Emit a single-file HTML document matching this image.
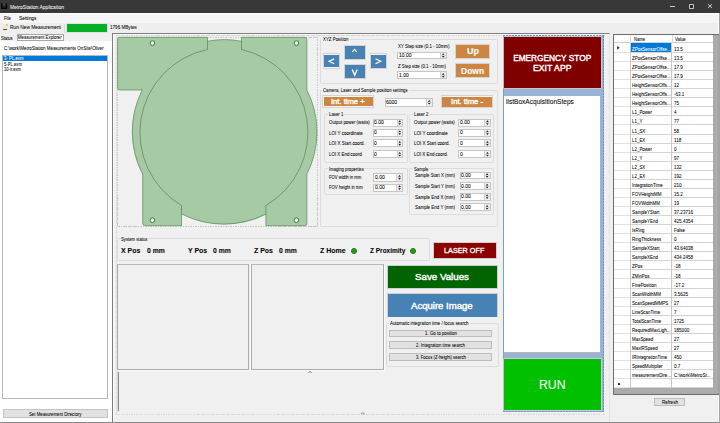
<!DOCTYPE html>
<html><head><meta charset="utf-8">
<style>
*{box-sizing:border-box;margin:0;padding:0}
html,body{width:720px;height:423px;overflow:hidden;background:#f0f0f0;font-family:"Liberation Sans",sans-serif;color:#000}
.a{position:absolute}
.t{position:absolute;white-space:nowrap;line-height:1;transform-origin:0 50%;-webkit-text-stroke:0.06px currentColor}
</style></head><body>
<div class="a" style="left:0.00px;top:0.00px;width:720.00px;height:12.60px;background:#383838"></div>
<svg class="a" style="left:0;top:0" width="10" height="12"><path d="M1.1 2.9 H2.4 V7.6 H5.8 V2.9 H7.1 V9 H1.1 Z" fill="#000"/><path d="M2.4 5.3 L4.1 6.6 L6.4 3.6" stroke="#1a1a1a" stroke-width="1.1" fill="none"/><path d="M2.6 4.2 L4.1 5.6 L5.8 3.4" stroke="#6a6a6a" stroke-width="0.5" fill="none"/></svg>
<div class="t" style="left:9.90px;top:4.72px;font-size:5.7px;color:#f4f4f4;transform:scaleX(0.880);">MetroStation Application</div>
<div class="a" style="left:670.00px;top:6.10px;width:5.00px;height:0.70px;background:#c8c8c8"></div>
<div class="a" style="left:688.80px;top:4.20px;width:5.20px;height:4.40px;border:1px solid #c4c4c4;border-radius:0.8px;background:#2a2a2a"></div>
<svg class="a" style="left:706px;top:3.2px" width="7" height="7"><path d="M1.9 1.1 L6 5 M6 1.1 L1.9 5" stroke="#d4d4d4" stroke-width="0.9"/></svg>
<div class="a" style="left:0.00px;top:12.60px;width:720.00px;height:10.20px;background:#f5f5f5"></div>
<div class="a" style="left:0.00px;top:12.60px;width:720.00px;height:1.00px;background:#fdfdfd"></div>
<div class="t" style="left:4.00px;top:15.72px;font-size:5.5px;transform:scaleX(0.779);">File</div>
<div class="t" style="left:18.90px;top:15.72px;font-size:5.5px;transform:scaleX(0.876);">Settings</div>
<div class="a" style="left:0.00px;top:22.80px;width:720.00px;height:11.20px;background:#eeeeee"></div>
<div class="a" style="left:3.00px;top:24.30px;width:4.80px;height:6.20px;background:#efe9d2"></div>
<div class="a" style="left:6.30px;top:24.30px;width:1.50px;height:1.50px;background:#d8d0b0"></div>
<div class="a" style="left:3.40px;top:29.00px;width:3.90px;height:1.00px;background:#4a4a48;border-radius:0.5px"></div>
<div class="t" style="left:10.00px;top:24.42px;font-size:6.1px;transform:scaleX(0.796);">Run New Measurement</div>
<div class="a" style="left:66.00px;top:23.20px;width:42.20px;height:9.50px;background:#e2e2e2"></div>
<div class="a" style="left:66.90px;top:24.00px;width:40.40px;height:7.90px;background:#06b025"></div>
<div class="a" style="left:64.40px;top:23.60px;width:0.80px;height:9.40px;background:#dcdcdc"></div>
<div class="t" style="left:109.80px;top:24.42px;font-size:6.1px;transform:scaleX(0.753);">1796 MBytes</div>
<div class="a" style="left:0.00px;top:41.10px;width:112.00px;height:380.90px;background:#fff"></div>
<div class="a" style="left:0.00px;top:34.70px;width:16.00px;height:6.80px;background:#f0f0f0"></div>
<div class="t" style="left:1.00px;top:35.82px;font-size:5.5px;transform:scaleX(0.744);">Status</div>
<div class="a" style="left:16.50px;top:34.10px;width:47.10px;height:6.50px;background:#fff;border:0.7px solid #a5a5a5"></div>
<div class="t" style="left:18.00px;top:34.92px;font-size:5.5px;transform:scaleX(0.785);">Measurement Explorer</div>
<div class="t" style="left:4.10px;top:46.32px;font-size:5.7px;transform:scaleX(0.781);">C:\work\MetroStation Measurements OnSite\Oliver</div>
<div class="a" style="left:2.10px;top:55.10px;width:105.90px;height:344.40px;background:#fff;border:0.7px solid #b3b8c0"></div>
<div class="a" style="left:2.80px;top:56.10px;width:104.60px;height:5.40px;background:#0078d7"></div>
<div class="t" style="left:3.80px;top:56.42px;font-size:5.7px;color:#fff;transform:scaleX(0.755);">3- PL.exm</div>
<div class="t" style="left:3.80px;top:62.12px;font-size:5.7px;transform:scaleX(0.738);">5-PL.exm</div>
<div class="t" style="left:3.80px;top:67.02px;font-size:5.7px;transform:scaleX(0.725);">10-ir.exm</div>
<div class="a" style="left:3.20px;top:409.30px;width:104.50px;height:8.40px;background:#e1e1e1;border:0.7px solid #c4c4c4"></div>
<div class="t" style="left:28.70px;top:411.82px;font-size:5.7px;transform:scaleX(0.757);">Set Measurement Directory</div>
<div class="a" style="left:112.00px;top:33.10px;width:498.20px;height:388.90px;border-top:1px solid #7d7d7d;border-left:1px solid #7d7d7d;border-right:1px solid #e3e3e3"></div>
<div class="a" style="left:113.00px;top:34.10px;width:1.00px;height:387.90px;background:#fbfbfb"></div>
<div class="a" style="left:113.00px;top:34.10px;width:496.00px;height:0.90px;background:#fbfbfb"></div>
<div class="a" style="left:116.30px;top:35.00px;width:488.70px;height:1.00px;background:repeating-linear-gradient(90deg,#d2d2d2 0 1.5px,transparent 1.5px 2.5px)"></div>
<div class="a" style="left:116.30px;top:414.00px;width:488.70px;height:1.00px;background:repeating-linear-gradient(90deg,#d6d6d6 0 1.5px,transparent 1.5px 2.5px)"></div>
<div class="a" style="left:116.00px;top:35.20px;width:1.00px;height:379.30px;background:repeating-linear-gradient(180deg,#dddddd 0 1.5px,transparent 1.5px 2.5px)"></div>
<div class="a" style="left:117.50px;top:37.00px;width:199.70px;height:1.00px;background:repeating-linear-gradient(90deg,#c8c8c8 0 1.5px,transparent 1.5px 2.5px)"></div>
<div class="a" style="left:117.50px;top:226.00px;width:199.70px;height:1.00px;background:repeating-linear-gradient(90deg,#c4c4c4 0 1.5px,transparent 1.5px 2.5px)"></div>
<div class="a" style="left:117.00px;top:37.40px;width:1.00px;height:189.00px;background:repeating-linear-gradient(180deg,#cacaca 0 1.5px,transparent 1.5px 2.5px)"></div>
<div class="a" style="left:317.00px;top:37.40px;width:1.00px;height:189.00px;background:repeating-linear-gradient(180deg,#cacaca 0 1.5px,transparent 1.5px 2.5px)"></div>
<svg class="a" style="left:0;top:0" width="720" height="423" viewBox="0 0 720 423">
<g fill="#a6caa4" stroke="none">
<circle cx="224.5" cy="132.1" r="92.5"/>
<path d="M119.8 37.3 H207.5 V90 H119.8 Q117.6 90 117.6 87.8 V39.5 Q117.6 37.3 119.8 37.3 Z"/>
<path d="M241.5 37.3 H304.7 Q306.9 37.3 306.9 39.5 V90 H241.5 Z"/>
<path d="M142.7 150 H181.5 V225.6 H144.9 Q142.7 225.6 142.7 223.4 Z"/>
<path d="M265.9 150 H306.9 V223.4 Q306.9 225.6 304.7 225.6 H265.9 Z"/>
</g>
<g fill="none" stroke="#467a46" stroke-width="0.6">
<path d="M207.5 49.5 A84.8 84.8 0 0 0 181.5 205.5"/>
<path d="M241.5 49.5 A84.8 84.8 0 0 1 265.9 205.5"/>
<path d="M119.8 37.3 H207.5 V49.6"/>
<path d="M241.5 49.6 V37.3 H304.7 Q306.9 37.3 306.9 39.5 V90"/>
<path d="M117.6 39.5 Q117.6 37.3 119.8 37.3"/>
<path d="M117.6 39.5 V87.8 Q117.6 90 119.8 90 H142.2"/>
<path d="M142.2 90 A92.5 92.5 0 0 0 142.7 174.1 V223.4 Q142.7 225.6 144.9 225.6 H181.5 V213.9"/>
<path d="M181.5 213.9 A92.5 92.5 0 0 0 265.9 213.9"/>
<path d="M181.5 205.5 V213.9 M265.9 205.5 V213.9"/>
<path d="M265.9 213.9 V225.6 H304.7 Q306.9 225.6 306.9 223.4 V174.1 A92.5 92.5 0 0 0 306.9 90"/>
<path d="M207.5 41.2 A92.5 92.5 0 0 1 241.5 41.2" stroke-width="0.6"/>
</g>
<g fill="#f8f8f8" stroke="#3f7645" stroke-width="1.0">
<circle cx="152.4" cy="43.1" r="2.3"/><circle cx="296.4" cy="43.1" r="2.3"/>
<circle cx="152.4" cy="220.2" r="2.3"/><circle cx="296.4" cy="220.2" r="2.3"/>
</g>
</svg>
<div class="a" style="left:319.50px;top:38.90px;width:178.10px;height:44.70px;border:1px solid #dcdcdc;border-radius:1.5px"></div>
<div class="a" style="left:322.20px;top:37.30px;width:27.40px;height:4.00px;background:#f0f0f0"></div>
<div class="t" style="left:323.20px;top:37.32px;font-size:5.7px;transform:scaleX(0.771);">XYZ Position</div>
<div class="a" style="left:322.60px;top:53.20px;width:17.70px;height:15.60px;background:#f6f6f6;border:0.8px solid #d6d2ce"></div>
<div class="a" style="left:324.00px;top:54.60px;width:14.90px;height:12.80px;background:#4682b4"></div>
<div class="a" style="left:343.50px;top:44.90px;width:22.90px;height:15.30px;background:#f6f6f6;border:0.8px solid #d6d2ce"></div>
<div class="a" style="left:344.90px;top:46.30px;width:20.10px;height:12.50px;background:#4682b4"></div>
<div class="a" style="left:343.50px;top:63.50px;width:22.90px;height:15.60px;background:#f6f6f6;border:0.8px solid #d6d2ce"></div>
<div class="a" style="left:344.90px;top:64.90px;width:20.10px;height:12.80px;background:#4682b4"></div>
<div class="a" style="left:369.60px;top:53.10px;width:17.90px;height:15.80px;background:#f6f6f6;border:0.8px solid #d6d2ce"></div>
<div class="a" style="left:371.00px;top:54.50px;width:15.10px;height:13.00px;background:#4682b4"></div>
<svg class="a" style="left:0;top:0" width="720" height="423"><g stroke="#fff" stroke-width="1.2" fill="none" stroke-linecap="butt"><path d="M334.2 58.9 L329 61.3 L334.2 63.8"/><path d="M375.5 58.7 L380.7 61.2 L375.5 63.8"/><path d="M352.3 51.8 L354.5 49.4 L356.7 51.8"/><path d="M352.2 69.6 L354.7 75.3 L357.2 69.6" stroke-width="1.35"/></g></svg>
<div class="t" style="left:398.00px;top:44.32px;font-size:5.7px;transform:scaleX(0.773);">XY Step size (0.1 - 10mm)</div>
<div class="a" style="left:397.30px;top:51.50px;width:49.50px;height:7.90px;background:#fff;border:1px solid #c6c6c6"></div>
<div class="a" style="left:440.00px;top:52.50px;width:5.80px;height:5.90px;background:#ededed;border-left:0.8px solid #d0d0d0"></div>
<div class="a" style="left:440.50px;top:55.15px;width:5.30px;height:0.60px;background:#d6d6d6"></div>
<div class="t" style="left:398.70px;top:52.97px;font-size:5.7px;transform:scaleX(0.880);">10.00</div>
<div class="t" style="left:398.00px;top:64.32px;font-size:5.7px;transform:scaleX(0.765);">Z Step size (0.1 - 10mm)</div>
<div class="a" style="left:397.30px;top:71.40px;width:49.50px;height:7.90px;background:#fff;border:1px solid #c6c6c6"></div>
<div class="a" style="left:440.00px;top:72.40px;width:5.80px;height:5.90px;background:#ededed;border-left:0.8px solid #d0d0d0"></div>
<div class="a" style="left:440.50px;top:75.05px;width:5.30px;height:0.60px;background:#d6d6d6"></div>
<div class="t" style="left:398.70px;top:72.87px;font-size:5.7px;transform:scaleX(0.880);">1.00</div>
<div class="a" style="left:454.70px;top:43.80px;width:35.80px;height:15.30px;background:#f6f6f6;border:0.8px solid #d4d4d4"></div>
<div class="a" style="left:456.00px;top:45.10px;width:33.20px;height:12.70px;background:#cd853f"></div>
<div class="t" style="left:466.65px;top:47.46px;font-size:9.0px;font-weight:bold;color:#fff;transform:scaleX(0.992);-webkit-text-stroke:0.1px #fff">Up</div>
<div class="a" style="left:454.70px;top:62.60px;width:35.80px;height:15.70px;background:#f6f6f6;border:0.8px solid #d4d4d4"></div>
<div class="a" style="left:456.00px;top:63.90px;width:33.20px;height:13.10px;background:#cd853f"></div>
<div class="t" style="left:461.05px;top:66.95px;font-size:8.6px;font-weight:bold;color:#fff;transform:scaleX(0.987);-webkit-text-stroke:0.1px #fff">Down</div>
<div class="a" style="left:319.90px;top:90.00px;width:177.70px;height:137.10px;border:1px solid #dcdcdc;border-radius:1.5px"></div>
<div class="a" style="left:322.20px;top:88.40px;width:86.80px;height:4.00px;background:#f0f0f0"></div>
<div class="t" style="left:323.20px;top:88.42px;font-size:5.7px;transform:scaleX(0.756);">Camera, Laser and Sample position settings</div>
<div class="a" style="left:322.20px;top:95.30px;width:51.80px;height:12.50px;background:#f6f6f6;border:0.8px solid #d4d4d4"></div>
<div class="a" style="left:323.50px;top:96.60px;width:49.20px;height:9.90px;background:#cd853f"></div>
<div class="t" style="left:331.25px;top:97.74px;font-size:7.4px;color:#fff;transform:scaleX(1.031);-webkit-text-stroke:0.35px #fff">Int. time +</div>
<div class="a" style="left:385.00px;top:98.00px;width:47.80px;height:8.60px;background:#fff;border:1px solid #c6c6c6"></div>
<div class="a" style="left:426.00px;top:99.00px;width:5.80px;height:6.60px;background:#ededed;border-left:0.8px solid #d0d0d0"></div>
<div class="a" style="left:426.50px;top:102.00px;width:5.30px;height:0.60px;background:#d6d6d6"></div>
<div class="t" style="left:386.40px;top:99.82px;font-size:5.7px;transform:scaleX(0.880);">6000</div>
<div class="a" style="left:440.70px;top:95.30px;width:52.80px;height:12.80px;background:#f6f6f6;border:0.8px solid #d4d4d4"></div>
<div class="a" style="left:442.00px;top:96.60px;width:50.20px;height:10.20px;background:#cd853f"></div>
<div class="t" style="left:451.10px;top:97.89px;font-size:7.4px;color:#fff;transform:scaleX(1.038);-webkit-text-stroke:0.35px #fff">Int. time -</div>
<div class="a" style="left:324.40px;top:113.60px;width:83.30px;height:49.20px;border:1px solid #dcdcdc;border-radius:1.5px"></div>
<div class="a" style="left:327.60px;top:112.00px;width:16.40px;height:4.00px;background:#f0f0f0"></div>
<div class="t" style="left:328.60px;top:112.02px;font-size:5.7px;transform:scaleX(0.757);">Laser 1</div>
<div class="a" style="left:409.30px;top:113.60px;width:84.30px;height:49.20px;border:1px solid #dcdcdc;border-radius:1.5px"></div>
<div class="a" style="left:412.60px;top:112.00px;width:16.40px;height:4.00px;background:#f0f0f0"></div>
<div class="t" style="left:413.60px;top:112.02px;font-size:5.7px;transform:scaleX(0.757);">Laser 2</div>
<div class="t" style="left:328.60px;top:120.42px;font-size:5.7px;transform:scaleX(0.773);">Output power (watts)</div>
<div class="a" style="left:373.00px;top:118.50px;width:30.30px;height:8.20px;background:#fff;border:1px solid #c6c6c6"></div>
<div class="a" style="left:396.50px;top:119.50px;width:5.80px;height:6.20px;background:#ededed;border-left:0.8px solid #d0d0d0"></div>
<div class="a" style="left:397.00px;top:122.30px;width:5.30px;height:0.60px;background:#d6d6d6"></div>
<div class="t" style="left:374.40px;top:120.12px;font-size:5.7px;transform:scaleX(0.880);">0.00</div>
<div class="t" style="left:413.60px;top:120.42px;font-size:5.7px;transform:scaleX(0.773);">Output power (watts)</div>
<div class="a" style="left:458.20px;top:118.50px;width:32.80px;height:8.20px;background:#fff;border:1px solid #c6c6c6"></div>
<div class="a" style="left:484.20px;top:119.50px;width:5.80px;height:6.20px;background:#ededed;border-left:0.8px solid #d0d0d0"></div>
<div class="a" style="left:484.70px;top:122.30px;width:5.30px;height:0.60px;background:#d6d6d6"></div>
<div class="t" style="left:459.60px;top:120.12px;font-size:5.7px;transform:scaleX(0.880);">0.00</div>
<div class="t" style="left:328.60px;top:130.52px;font-size:5.7px;transform:scaleX(0.796);">LOI Y coordinate</div>
<div class="a" style="left:373.00px;top:128.60px;width:30.30px;height:8.20px;background:#fff;border:1px solid #c6c6c6"></div>
<div class="a" style="left:396.50px;top:129.60px;width:5.80px;height:6.20px;background:#ededed;border-left:0.8px solid #d0d0d0"></div>
<div class="a" style="left:397.00px;top:132.40px;width:5.30px;height:0.60px;background:#d6d6d6"></div>
<div class="t" style="left:374.40px;top:130.22px;font-size:5.7px;transform:scaleX(0.880);">0</div>
<div class="t" style="left:413.60px;top:130.52px;font-size:5.7px;transform:scaleX(0.796);">LOI Y coordinate</div>
<div class="a" style="left:458.20px;top:128.60px;width:32.80px;height:8.20px;background:#fff;border:1px solid #c6c6c6"></div>
<div class="a" style="left:484.20px;top:129.60px;width:5.80px;height:6.20px;background:#ededed;border-left:0.8px solid #d0d0d0"></div>
<div class="a" style="left:484.70px;top:132.40px;width:5.30px;height:0.60px;background:#d6d6d6"></div>
<div class="t" style="left:459.60px;top:130.22px;font-size:5.7px;transform:scaleX(0.880);">0</div>
<div class="t" style="left:328.60px;top:141.22px;font-size:5.7px;transform:scaleX(0.787);">LOI X Start coord.</div>
<div class="a" style="left:373.00px;top:139.30px;width:30.30px;height:8.20px;background:#fff;border:1px solid #c6c6c6"></div>
<div class="a" style="left:396.50px;top:140.30px;width:5.80px;height:6.20px;background:#ededed;border-left:0.8px solid #d0d0d0"></div>
<div class="a" style="left:397.00px;top:143.10px;width:5.30px;height:0.60px;background:#d6d6d6"></div>
<div class="t" style="left:374.40px;top:140.92px;font-size:5.7px;transform:scaleX(0.880);">0</div>
<div class="t" style="left:413.60px;top:141.22px;font-size:5.7px;transform:scaleX(0.787);">LOI X Start coord.</div>
<div class="a" style="left:458.20px;top:139.30px;width:32.80px;height:8.20px;background:#fff;border:1px solid #c6c6c6"></div>
<div class="a" style="left:484.20px;top:140.30px;width:5.80px;height:6.20px;background:#ededed;border-left:0.8px solid #d0d0d0"></div>
<div class="a" style="left:484.70px;top:143.10px;width:5.30px;height:0.60px;background:#d6d6d6"></div>
<div class="t" style="left:459.60px;top:140.92px;font-size:5.7px;transform:scaleX(0.880);">0</div>
<div class="t" style="left:328.60px;top:152.12px;font-size:5.7px;transform:scaleX(0.775);">LOI X End coord.</div>
<div class="a" style="left:373.00px;top:150.20px;width:30.30px;height:8.20px;background:#fff;border:1px solid #c6c6c6"></div>
<div class="a" style="left:396.50px;top:151.20px;width:5.80px;height:6.20px;background:#ededed;border-left:0.8px solid #d0d0d0"></div>
<div class="a" style="left:397.00px;top:154.00px;width:5.30px;height:0.60px;background:#d6d6d6"></div>
<div class="t" style="left:374.40px;top:151.82px;font-size:5.7px;transform:scaleX(0.880);">0</div>
<div class="t" style="left:413.60px;top:152.12px;font-size:5.7px;transform:scaleX(0.775);">LOI X End coord.</div>
<div class="a" style="left:458.20px;top:150.20px;width:32.80px;height:8.20px;background:#fff;border:1px solid #c6c6c6"></div>
<div class="a" style="left:484.20px;top:151.20px;width:5.80px;height:6.20px;background:#ededed;border-left:0.8px solid #d0d0d0"></div>
<div class="a" style="left:484.70px;top:154.00px;width:5.30px;height:0.60px;background:#d6d6d6"></div>
<div class="t" style="left:459.60px;top:151.82px;font-size:5.7px;transform:scaleX(0.880);">0</div>
<div class="a" style="left:324.40px;top:168.10px;width:83.20px;height:26.50px;border:1px solid #dcdcdc;border-radius:1.5px"></div>
<div class="a" style="left:327.60px;top:166.50px;width:36.90px;height:4.00px;background:#f0f0f0"></div>
<div class="t" style="left:328.60px;top:166.52px;font-size:5.7px;transform:scaleX(0.739);">Imaging properties</div>
<div class="t" style="left:328.60px;top:175.12px;font-size:5.7px;transform:scaleX(0.741);">FOV width in mm</div>
<div class="a" style="left:373.20px;top:173.20px;width:29.90px;height:8.40px;background:#fff;border:1px solid #c6c6c6"></div>
<div class="a" style="left:396.30px;top:174.20px;width:5.80px;height:6.40px;background:#ededed;border-left:0.8px solid #d0d0d0"></div>
<div class="a" style="left:396.80px;top:177.10px;width:5.30px;height:0.60px;background:#d6d6d6"></div>
<div class="t" style="left:374.60px;top:174.92px;font-size:5.7px;transform:scaleX(0.880);">0.00</div>
<div class="t" style="left:328.60px;top:185.22px;font-size:5.7px;transform:scaleX(0.738);">FOV height in mm</div>
<div class="a" style="left:373.20px;top:183.50px;width:29.90px;height:8.20px;background:#fff;border:1px solid #c6c6c6"></div>
<div class="a" style="left:396.30px;top:184.50px;width:5.80px;height:6.20px;background:#ededed;border-left:0.8px solid #d0d0d0"></div>
<div class="a" style="left:396.80px;top:187.30px;width:5.30px;height:0.60px;background:#d6d6d6"></div>
<div class="t" style="left:374.60px;top:185.12px;font-size:5.7px;transform:scaleX(0.880);">0.00</div>
<div class="a" style="left:408.80px;top:168.10px;width:84.80px;height:47.00px;border:1px solid #dcdcdc;border-radius:1.5px"></div>
<div class="a" style="left:412.60px;top:166.50px;width:16.40px;height:4.00px;background:#f0f0f0"></div>
<div class="t" style="left:413.60px;top:166.52px;font-size:5.7px;transform:scaleX(0.745);">Sample</div>
<div class="t" style="left:415.00px;top:173.32px;font-size:5.7px;transform:scaleX(0.752);">Sample Start X (mm)</div>
<div class="a" style="left:459.50px;top:171.60px;width:31.20px;height:7.80px;background:#fff;border:1px solid #c6c6c6"></div>
<div class="a" style="left:483.90px;top:172.60px;width:5.80px;height:5.80px;background:#ededed;border-left:0.8px solid #d0d0d0"></div>
<div class="a" style="left:484.40px;top:175.20px;width:5.30px;height:0.60px;background:#d6d6d6"></div>
<div class="t" style="left:460.90px;top:173.02px;font-size:5.7px;transform:scaleX(0.880);">0.00</div>
<div class="t" style="left:415.00px;top:183.92px;font-size:5.7px;transform:scaleX(0.755);">Sample Start Y (mm)</div>
<div class="a" style="left:459.50px;top:182.20px;width:31.20px;height:7.80px;background:#fff;border:1px solid #c6c6c6"></div>
<div class="a" style="left:483.90px;top:183.20px;width:5.80px;height:5.80px;background:#ededed;border-left:0.8px solid #d0d0d0"></div>
<div class="a" style="left:484.40px;top:185.80px;width:5.30px;height:0.60px;background:#d6d6d6"></div>
<div class="t" style="left:460.90px;top:183.62px;font-size:5.7px;transform:scaleX(0.880);">0.00</div>
<div class="t" style="left:415.00px;top:194.52px;font-size:5.7px;transform:scaleX(0.780);">Sample End X (mm)</div>
<div class="a" style="left:459.50px;top:192.80px;width:31.20px;height:7.80px;background:#fff;border:1px solid #c6c6c6"></div>
<div class="a" style="left:483.90px;top:193.80px;width:5.80px;height:5.80px;background:#ededed;border-left:0.8px solid #d0d0d0"></div>
<div class="a" style="left:484.40px;top:196.40px;width:5.30px;height:0.60px;background:#d6d6d6"></div>
<div class="t" style="left:460.90px;top:194.22px;font-size:5.7px;transform:scaleX(0.880);">0.00</div>
<div class="t" style="left:415.00px;top:205.12px;font-size:5.7px;transform:scaleX(0.783);">Sample End Y (mm)</div>
<div class="a" style="left:459.50px;top:203.40px;width:31.20px;height:7.80px;background:#fff;border:1px solid #c6c6c6"></div>
<div class="a" style="left:483.90px;top:204.40px;width:5.80px;height:5.80px;background:#ededed;border-left:0.8px solid #d0d0d0"></div>
<div class="a" style="left:484.40px;top:207.00px;width:5.30px;height:0.60px;background:#d6d6d6"></div>
<div class="t" style="left:460.90px;top:204.82px;font-size:5.7px;transform:scaleX(0.880);">0.00</div>
<div class="a" style="left:116.80px;top:238.40px;width:312.80px;height:23.00px;border:1px solid #dcdcdc;border-radius:1.5px"></div>
<div class="a" style="left:120.00px;top:236.80px;width:28.40px;height:4.00px;background:#f0f0f0"></div>
<div class="t" style="left:121.00px;top:236.82px;font-size:5.7px;transform:scaleX(0.738);">System status</div>
<div class="t" style="left:121.40px;top:247.44px;font-size:7.3px;font-weight:bold;transform:scaleX(0.956);">X Pos</div>
<div class="t" style="left:146.70px;top:247.44px;font-size:7.3px;font-weight:bold;transform:scaleX(0.933);">0 mm</div>
<div class="t" style="left:187.80px;top:247.44px;font-size:7.3px;font-weight:bold;transform:scaleX(0.953);">Y Pos</div>
<div class="t" style="left:213.20px;top:247.44px;font-size:7.3px;font-weight:bold;transform:scaleX(0.933);">0 mm</div>
<div class="t" style="left:254.20px;top:247.44px;font-size:7.3px;font-weight:bold;transform:scaleX(0.956);">Z Pos</div>
<div class="t" style="left:279.20px;top:247.44px;font-size:7.3px;font-weight:bold;transform:scaleX(0.933);">0 mm</div>
<div class="t" style="left:319.80px;top:247.44px;font-size:7.3px;font-weight:bold;transform:scaleX(0.960);">Z Home</div>
<div class="a" style="left:350.50px;top:248.00px;width:6.00px;height:6.00px;background:#1e9e1e;border-radius:50%;border:0.5px solid #157a15"></div>
<div class="t" style="left:369.60px;top:247.44px;font-size:7.3px;font-weight:bold;transform:scaleX(0.890);">Z Proximity</div>
<div class="a" style="left:410.00px;top:248.00px;width:6.00px;height:6.00px;background:#1e9e1e;border-radius:50%;border:0.5px solid #157a15"></div>
<div class="a" style="left:433.10px;top:242.20px;width:64.00px;height:16.90px;background:#e6e6e6;border:0.6px solid #cfcfcf"></div>
<div class="a" style="left:433.90px;top:243.00px;width:62.40px;height:15.30px;background:#8b0000"></div>
<div class="t" style="left:444.20px;top:246.89px;font-size:7.2px;color:#fff;transform:scaleX(1.010);-webkit-text-stroke:0.3px #fff">LASER OFF</div>
<div class="a" style="left:117.20px;top:263.70px;width:132.30px;height:106.10px;border:1px solid #ababab;border-top-color:#b8b8b8;background:#f0f0f0"></div>
<div class="a" style="left:249.50px;top:264.00px;width:1.40px;height:106.80px;background:#fbfbfb"></div>
<div class="a" style="left:251.10px;top:263.70px;width:132.70px;height:106.10px;border:1px solid #ababab;border-top-color:#b8b8b8;background:#f0f0f0"></div>
<div class="a" style="left:117.50px;top:369.80px;width:267.00px;height:1.10px;background:#fbfbfb"></div>
<div class="a" style="left:383.80px;top:264.00px;width:1.20px;height:106.80px;background:#fbfbfb"></div>
<div class="a" style="left:118.20px;top:372.00px;width:1.00px;height:38.80px;background:#8a8a8a"></div>
<div class="a" style="left:117.00px;top:371.00px;width:266.00px;height:40.50px;border-left:0.6px solid #d8d8d8"></div>
<div class="a" style="left:387.20px;top:264.80px;width:110.60px;height:24.00px;background:#e6e6e6;border:0.6px solid #cfcfcf"></div>
<div class="a" style="left:388.00px;top:265.60px;width:109.00px;height:22.40px;background:#006400"></div>
<div class="t" style="left:415.00px;top:273.06px;font-size:9.3px;color:#fff;transform:scaleX(1.048);-webkit-text-stroke:0.4px #fff">Save Values</div>
<div class="a" style="left:387.20px;top:293.10px;width:110.60px;height:24.40px;background:#e6e6e6;border:0.6px solid #cfcfcf"></div>
<div class="a" style="left:388.00px;top:293.90px;width:109.00px;height:22.80px;background:#4682b4"></div>
<div class="t" style="left:411.30px;top:301.71px;font-size:9.0px;color:#fff;transform:scaleX(1.063);-webkit-text-stroke:0.4px #fff">Acquire Image</div>
<div class="a" style="left:386.00px;top:323.00px;width:113.40px;height:44.20px;border:1px solid #dcdcdc;border-radius:1.5px"></div>
<div class="a" style="left:389.20px;top:321.40px;width:80.70px;height:4.00px;background:#f0f0f0"></div>
<div class="t" style="left:390.20px;top:321.42px;font-size:5.7px;transform:scaleX(0.764);">Automatic integration time / focus search</div>
<div class="a" style="left:389.40px;top:329.60px;width:102.40px;height:7.90px;background:#e1e1e1;border:0.8px solid #bdbdbd"></div>
<div class="t" style="left:424.60px;top:331.37px;font-size:5.7px;transform:scaleX(0.771);">1. Go to position</div>
<div class="a" style="left:389.40px;top:341.45px;width:102.40px;height:7.90px;background:#e1e1e1;border:0.8px solid #bdbdbd"></div>
<div class="t" style="left:416.10px;top:343.22px;font-size:5.7px;transform:scaleX(0.762);">2. Integration time search</div>
<div class="a" style="left:389.40px;top:353.30px;width:102.40px;height:7.90px;background:#e1e1e1;border:0.8px solid #bdbdbd"></div>
<div class="t" style="left:415.60px;top:355.07px;font-size:5.7px;transform:scaleX(0.748);">3. Focus (Z-height) search</div>
<div class="a" style="left:503.40px;top:36.00px;width:100.20px;height:375.60px;background:#98b3d3"></div>
<div class="a" style="left:503.00px;top:35.00px;width:100.60px;height:1.00px;background:repeating-linear-gradient(90deg,#6f8eb2 0 2px,transparent 2px 3px)"></div>
<div class="a" style="left:503.00px;top:411.00px;width:100.60px;height:1.00px;background:repeating-linear-gradient(90deg,#7f9cc0 0 2px,transparent 2px 3px)"></div>
<div class="a" style="left:603.00px;top:35.60px;width:1.00px;height:376.00px;background:repeating-linear-gradient(180deg,#6f8eb2 0 2px,transparent 2px 3px)"></div>
<div class="a" style="left:503.00px;top:36.00px;width:1.00px;height:375.60px;background:#7d9dc4"></div>
<div class="a" style="left:504.00px;top:36.80px;width:96.60px;height:51.00px;background:#800000;box-shadow:0 0 0 0.6px #e8c8c8"></div>
<div class="t" style="left:513.15px;top:53.75px;font-size:8.3px;color:#fff;-webkit-text-stroke:0.38px #fff">EMERGENCY STOP</div>
<div class="t" style="left:533.05px;top:63.75px;font-size:8.3px;color:#fff;transform:scaleX(1.047);-webkit-text-stroke:0.38px #fff">EXIT APP</div>
<div class="a" style="left:504.00px;top:96.40px;width:96.40px;height:256.90px;background:#fff;border-bottom:0.7px solid #b6b6b6"></div>
<div class="t" style="left:505.50px;top:99.08px;font-size:6.8px;transform:scaleX(0.966);">listBoxAcquisitionSteps</div>
<div class="a" style="left:504.00px;top:359.20px;width:96.60px;height:51.00px;background:#00c000;box-shadow:0 0 0 0.6px #e8d8e8"></div>
<div class="t" style="left:539.00px;top:379.30px;font-size:12.5px;color:#fff;transform:scaleX(0.982);">RUN</div>
<div class="a" style="left:610.20px;top:33.50px;width:109.80px;height:388.10px;background:#f0f0f0"></div>
<div class="a" style="left:613.30px;top:34.40px;width:106.70px;height:360.60px;background:#ababab;border-left:1px solid #6b6b6b;border-top:1px solid #6b6b6b;border-bottom:1px solid #6b6b6b;border-bottom-left-radius:1.5px"></div>
<div class="a" style="left:614.40px;top:35.40px;width:98.80px;height:7.90px;background:#fff;border-bottom:0.7px solid #d0d0d0"></div>
<div class="a" style="left:630.30px;top:35.40px;width:0.70px;height:7.90px;background:#d9d9d9"></div>
<div class="a" style="left:671.50px;top:35.40px;width:0.70px;height:7.90px;background:#d9d9d9"></div>
<div class="t" style="left:633.70px;top:36.92px;font-size:5.7px;transform:scaleX(0.730);">Name</div>
<div class="t" style="left:675.00px;top:36.92px;font-size:5.7px;transform:scaleX(0.763);">Value</div>
<div class="a" style="left:614.40px;top:43.30px;width:98.80px;height:344.30px;background:#fff"></div>
<div class="a" style="left:614.40px;top:51.96px;width:16.20px;height:0.80px;background:#e2e2e2"></div>
<div class="a" style="left:630.60px;top:51.96px;width:82.60px;height:0.80px;background:#d3d3d3"></div>
<div class="a" style="left:614.40px;top:61.02px;width:16.20px;height:0.80px;background:#e2e2e2"></div>
<div class="a" style="left:630.60px;top:61.02px;width:82.60px;height:0.80px;background:#d3d3d3"></div>
<div class="a" style="left:614.40px;top:70.08px;width:16.20px;height:0.80px;background:#e2e2e2"></div>
<div class="a" style="left:630.60px;top:70.08px;width:82.60px;height:0.80px;background:#d3d3d3"></div>
<div class="a" style="left:614.40px;top:79.14px;width:16.20px;height:0.80px;background:#e2e2e2"></div>
<div class="a" style="left:630.60px;top:79.14px;width:82.60px;height:0.80px;background:#d3d3d3"></div>
<div class="a" style="left:614.40px;top:88.20px;width:16.20px;height:0.80px;background:#e2e2e2"></div>
<div class="a" style="left:630.60px;top:88.20px;width:82.60px;height:0.80px;background:#d3d3d3"></div>
<div class="a" style="left:614.40px;top:97.26px;width:16.20px;height:0.80px;background:#e2e2e2"></div>
<div class="a" style="left:630.60px;top:97.26px;width:82.60px;height:0.80px;background:#d3d3d3"></div>
<div class="a" style="left:614.40px;top:106.32px;width:16.20px;height:0.80px;background:#e2e2e2"></div>
<div class="a" style="left:630.60px;top:106.32px;width:82.60px;height:0.80px;background:#d3d3d3"></div>
<div class="a" style="left:614.40px;top:115.38px;width:16.20px;height:0.80px;background:#e2e2e2"></div>
<div class="a" style="left:630.60px;top:115.38px;width:82.60px;height:0.80px;background:#d3d3d3"></div>
<div class="a" style="left:614.40px;top:124.44px;width:16.20px;height:0.80px;background:#e2e2e2"></div>
<div class="a" style="left:630.60px;top:124.44px;width:82.60px;height:0.80px;background:#d3d3d3"></div>
<div class="a" style="left:614.40px;top:133.51px;width:16.20px;height:0.80px;background:#e2e2e2"></div>
<div class="a" style="left:630.60px;top:133.51px;width:82.60px;height:0.80px;background:#d3d3d3"></div>
<div class="a" style="left:614.40px;top:142.57px;width:16.20px;height:0.80px;background:#e2e2e2"></div>
<div class="a" style="left:630.60px;top:142.57px;width:82.60px;height:0.80px;background:#d3d3d3"></div>
<div class="a" style="left:614.40px;top:151.63px;width:16.20px;height:0.80px;background:#e2e2e2"></div>
<div class="a" style="left:630.60px;top:151.63px;width:82.60px;height:0.80px;background:#d3d3d3"></div>
<div class="a" style="left:614.40px;top:160.69px;width:16.20px;height:0.80px;background:#e2e2e2"></div>
<div class="a" style="left:630.60px;top:160.69px;width:82.60px;height:0.80px;background:#d3d3d3"></div>
<div class="a" style="left:614.40px;top:169.75px;width:16.20px;height:0.80px;background:#e2e2e2"></div>
<div class="a" style="left:630.60px;top:169.75px;width:82.60px;height:0.80px;background:#d3d3d3"></div>
<div class="a" style="left:614.40px;top:178.81px;width:16.20px;height:0.80px;background:#e2e2e2"></div>
<div class="a" style="left:630.60px;top:178.81px;width:82.60px;height:0.80px;background:#d3d3d3"></div>
<div class="a" style="left:614.40px;top:187.87px;width:16.20px;height:0.80px;background:#e2e2e2"></div>
<div class="a" style="left:630.60px;top:187.87px;width:82.60px;height:0.80px;background:#d3d3d3"></div>
<div class="a" style="left:614.40px;top:196.93px;width:16.20px;height:0.80px;background:#e2e2e2"></div>
<div class="a" style="left:630.60px;top:196.93px;width:82.60px;height:0.80px;background:#d3d3d3"></div>
<div class="a" style="left:614.40px;top:205.99px;width:16.20px;height:0.80px;background:#e2e2e2"></div>
<div class="a" style="left:630.60px;top:205.99px;width:82.60px;height:0.80px;background:#d3d3d3"></div>
<div class="a" style="left:614.40px;top:215.05px;width:16.20px;height:0.80px;background:#e2e2e2"></div>
<div class="a" style="left:630.60px;top:215.05px;width:82.60px;height:0.80px;background:#d3d3d3"></div>
<div class="a" style="left:614.40px;top:224.11px;width:16.20px;height:0.80px;background:#e2e2e2"></div>
<div class="a" style="left:630.60px;top:224.11px;width:82.60px;height:0.80px;background:#d3d3d3"></div>
<div class="a" style="left:614.40px;top:233.17px;width:16.20px;height:0.80px;background:#e2e2e2"></div>
<div class="a" style="left:630.60px;top:233.17px;width:82.60px;height:0.80px;background:#d3d3d3"></div>
<div class="a" style="left:614.40px;top:242.23px;width:16.20px;height:0.80px;background:#e2e2e2"></div>
<div class="a" style="left:630.60px;top:242.23px;width:82.60px;height:0.80px;background:#d3d3d3"></div>
<div class="a" style="left:614.40px;top:251.29px;width:16.20px;height:0.80px;background:#e2e2e2"></div>
<div class="a" style="left:630.60px;top:251.29px;width:82.60px;height:0.80px;background:#d3d3d3"></div>
<div class="a" style="left:614.40px;top:260.35px;width:16.20px;height:0.80px;background:#e2e2e2"></div>
<div class="a" style="left:630.60px;top:260.35px;width:82.60px;height:0.80px;background:#d3d3d3"></div>
<div class="a" style="left:614.40px;top:269.41px;width:16.20px;height:0.80px;background:#e2e2e2"></div>
<div class="a" style="left:630.60px;top:269.41px;width:82.60px;height:0.80px;background:#d3d3d3"></div>
<div class="a" style="left:614.40px;top:278.47px;width:16.20px;height:0.80px;background:#e2e2e2"></div>
<div class="a" style="left:630.60px;top:278.47px;width:82.60px;height:0.80px;background:#d3d3d3"></div>
<div class="a" style="left:614.40px;top:287.53px;width:16.20px;height:0.80px;background:#e2e2e2"></div>
<div class="a" style="left:630.60px;top:287.53px;width:82.60px;height:0.80px;background:#d3d3d3"></div>
<div class="a" style="left:614.40px;top:296.59px;width:16.20px;height:0.80px;background:#e2e2e2"></div>
<div class="a" style="left:630.60px;top:296.59px;width:82.60px;height:0.80px;background:#d3d3d3"></div>
<div class="a" style="left:614.40px;top:305.66px;width:16.20px;height:0.80px;background:#e2e2e2"></div>
<div class="a" style="left:630.60px;top:305.66px;width:82.60px;height:0.80px;background:#d3d3d3"></div>
<div class="a" style="left:614.40px;top:314.72px;width:16.20px;height:0.80px;background:#e2e2e2"></div>
<div class="a" style="left:630.60px;top:314.72px;width:82.60px;height:0.80px;background:#d3d3d3"></div>
<div class="a" style="left:614.40px;top:323.78px;width:16.20px;height:0.80px;background:#e2e2e2"></div>
<div class="a" style="left:630.60px;top:323.78px;width:82.60px;height:0.80px;background:#d3d3d3"></div>
<div class="a" style="left:614.40px;top:332.84px;width:16.20px;height:0.80px;background:#e2e2e2"></div>
<div class="a" style="left:630.60px;top:332.84px;width:82.60px;height:0.80px;background:#d3d3d3"></div>
<div class="a" style="left:614.40px;top:341.90px;width:16.20px;height:0.80px;background:#e2e2e2"></div>
<div class="a" style="left:630.60px;top:341.90px;width:82.60px;height:0.80px;background:#d3d3d3"></div>
<div class="a" style="left:614.40px;top:350.96px;width:16.20px;height:0.80px;background:#e2e2e2"></div>
<div class="a" style="left:630.60px;top:350.96px;width:82.60px;height:0.80px;background:#d3d3d3"></div>
<div class="a" style="left:614.40px;top:360.02px;width:16.20px;height:0.80px;background:#e2e2e2"></div>
<div class="a" style="left:630.60px;top:360.02px;width:82.60px;height:0.80px;background:#d3d3d3"></div>
<div class="a" style="left:614.40px;top:369.08px;width:16.20px;height:0.80px;background:#e2e2e2"></div>
<div class="a" style="left:630.60px;top:369.08px;width:82.60px;height:0.80px;background:#d3d3d3"></div>
<div class="a" style="left:614.40px;top:378.14px;width:16.20px;height:0.80px;background:#e2e2e2"></div>
<div class="a" style="left:630.60px;top:378.14px;width:82.60px;height:0.80px;background:#d3d3d3"></div>
<div class="a" style="left:614.40px;top:387.20px;width:16.20px;height:0.80px;background:#e2e2e2"></div>
<div class="a" style="left:630.60px;top:387.20px;width:82.60px;height:0.80px;background:#d3d3d3"></div>
<div class="a" style="left:630.25px;top:43.30px;width:0.70px;height:344.30px;background:#c8c8c8"></div>
<div class="a" style="left:671.45px;top:43.30px;width:0.70px;height:344.30px;background:#c8c8c8"></div>
<div class="a" style="left:630.95px;top:43.30px;width:40.50px;height:8.36px;background:#0078d7"></div>
<div class="t" style="left:632.20px;top:46.00px;font-size:6.0px;color:#fff;transform:scaleX(0.740);">ZPosSensorOffse...</div>
<div class="t" style="left:673.80px;top:46.00px;font-size:6.0px;transform:scaleX(0.760);">13.5</div>
<div class="t" style="left:632.20px;top:55.06px;font-size:6.0px;transform:scaleX(0.740);">ZPosSensorOffse...</div>
<div class="t" style="left:673.80px;top:55.06px;font-size:6.0px;transform:scaleX(0.760);">13.5</div>
<div class="t" style="left:632.20px;top:64.12px;font-size:6.0px;transform:scaleX(0.740);">ZPosSensorOffse...</div>
<div class="t" style="left:673.80px;top:64.12px;font-size:6.0px;transform:scaleX(0.760);">17.9</div>
<div class="t" style="left:632.20px;top:73.18px;font-size:6.0px;transform:scaleX(0.740);">ZPosSensorOffse...</div>
<div class="t" style="left:673.80px;top:73.18px;font-size:6.0px;transform:scaleX(0.760);">17.9</div>
<div class="t" style="left:632.20px;top:82.24px;font-size:6.0px;transform:scaleX(0.740);">HeightSensorOffs...</div>
<div class="t" style="left:673.80px;top:82.24px;font-size:6.0px;transform:scaleX(0.760);">12</div>
<div class="t" style="left:632.20px;top:91.30px;font-size:6.0px;transform:scaleX(0.740);">HeightSensorOffs...</div>
<div class="t" style="left:673.80px;top:91.30px;font-size:6.0px;transform:scaleX(0.760);">-63.1</div>
<div class="t" style="left:632.20px;top:100.37px;font-size:6.0px;transform:scaleX(0.740);">HeightSensorOffs...</div>
<div class="t" style="left:673.80px;top:100.37px;font-size:6.0px;transform:scaleX(0.760);">75</div>
<div class="t" style="left:632.20px;top:109.43px;font-size:6.0px;transform:scaleX(0.740);">L1_Power</div>
<div class="t" style="left:673.80px;top:109.43px;font-size:6.0px;transform:scaleX(0.760);">4</div>
<div class="t" style="left:632.20px;top:118.49px;font-size:6.0px;transform:scaleX(0.740);">L1_Y</div>
<div class="t" style="left:673.80px;top:118.49px;font-size:6.0px;transform:scaleX(0.760);">77</div>
<div class="t" style="left:632.20px;top:127.55px;font-size:6.0px;transform:scaleX(0.740);">L1_SX</div>
<div class="t" style="left:673.80px;top:127.55px;font-size:6.0px;transform:scaleX(0.760);">58</div>
<div class="t" style="left:632.20px;top:136.61px;font-size:6.0px;transform:scaleX(0.740);">L1_EX</div>
<div class="t" style="left:673.80px;top:136.61px;font-size:6.0px;transform:scaleX(0.760);">118</div>
<div class="t" style="left:632.20px;top:145.67px;font-size:6.0px;transform:scaleX(0.740);">L2_Power</div>
<div class="t" style="left:673.80px;top:145.67px;font-size:6.0px;transform:scaleX(0.760);">0</div>
<div class="t" style="left:632.20px;top:154.73px;font-size:6.0px;transform:scaleX(0.740);">L2_Y</div>
<div class="t" style="left:673.80px;top:154.73px;font-size:6.0px;transform:scaleX(0.760);">97</div>
<div class="t" style="left:632.20px;top:163.79px;font-size:6.0px;transform:scaleX(0.740);">L2_SX</div>
<div class="t" style="left:673.80px;top:163.79px;font-size:6.0px;transform:scaleX(0.760);">132</div>
<div class="t" style="left:632.20px;top:172.85px;font-size:6.0px;transform:scaleX(0.740);">L2_EX</div>
<div class="t" style="left:673.80px;top:172.85px;font-size:6.0px;transform:scaleX(0.760);">192</div>
<div class="t" style="left:632.20px;top:181.91px;font-size:6.0px;transform:scaleX(0.740);">IntegrationTime</div>
<div class="t" style="left:673.80px;top:181.91px;font-size:6.0px;transform:scaleX(0.760);">210</div>
<div class="t" style="left:632.20px;top:190.97px;font-size:6.0px;transform:scaleX(0.740);">FOVHeightMM</div>
<div class="t" style="left:673.80px;top:190.97px;font-size:6.0px;transform:scaleX(0.760);">15.2</div>
<div class="t" style="left:632.20px;top:200.03px;font-size:6.0px;transform:scaleX(0.740);">FOVWidthMM</div>
<div class="t" style="left:673.80px;top:200.03px;font-size:6.0px;transform:scaleX(0.760);">19</div>
<div class="t" style="left:632.20px;top:209.09px;font-size:6.0px;transform:scaleX(0.740);">SampleYStart</div>
<div class="t" style="left:673.80px;top:209.09px;font-size:6.0px;transform:scaleX(0.760);">37.23716</div>
<div class="t" style="left:632.20px;top:218.15px;font-size:6.0px;transform:scaleX(0.740);">SampleYEnd</div>
<div class="t" style="left:673.80px;top:218.15px;font-size:6.0px;transform:scaleX(0.760);">425.4354</div>
<div class="t" style="left:632.20px;top:227.21px;font-size:6.0px;transform:scaleX(0.740);">IsRing</div>
<div class="t" style="left:673.80px;top:227.21px;font-size:6.0px;transform:scaleX(0.760);">False</div>
<div class="t" style="left:632.20px;top:236.27px;font-size:6.0px;transform:scaleX(0.740);">RingThickness</div>
<div class="t" style="left:673.80px;top:236.27px;font-size:6.0px;transform:scaleX(0.760);">0</div>
<div class="t" style="left:632.20px;top:245.33px;font-size:6.0px;transform:scaleX(0.740);">SampleXStart</div>
<div class="t" style="left:673.80px;top:245.33px;font-size:6.0px;transform:scaleX(0.760);">43.64038</div>
<div class="t" style="left:632.20px;top:254.39px;font-size:6.0px;transform:scaleX(0.740);">SampleXEnd</div>
<div class="t" style="left:673.80px;top:254.39px;font-size:6.0px;transform:scaleX(0.760);">434.2458</div>
<div class="t" style="left:632.20px;top:263.45px;font-size:6.0px;transform:scaleX(0.740);">ZPos</div>
<div class="t" style="left:673.80px;top:263.45px;font-size:6.0px;transform:scaleX(0.760);">-18</div>
<div class="t" style="left:632.20px;top:272.52px;font-size:6.0px;transform:scaleX(0.740);">ZMinPos</div>
<div class="t" style="left:673.80px;top:272.52px;font-size:6.0px;transform:scaleX(0.760);">-18</div>
<div class="t" style="left:632.20px;top:281.58px;font-size:6.0px;transform:scaleX(0.740);">FinePosition</div>
<div class="t" style="left:673.80px;top:281.58px;font-size:6.0px;transform:scaleX(0.760);">-17.2</div>
<div class="t" style="left:632.20px;top:290.64px;font-size:6.0px;transform:scaleX(0.740);">ScanWidthMM</div>
<div class="t" style="left:673.80px;top:290.64px;font-size:6.0px;transform:scaleX(0.760);">3.5625</div>
<div class="t" style="left:632.20px;top:299.70px;font-size:6.0px;transform:scaleX(0.740);">ScanSpeedMMPS</div>
<div class="t" style="left:673.80px;top:299.70px;font-size:6.0px;transform:scaleX(0.760);">27</div>
<div class="t" style="left:632.20px;top:308.76px;font-size:6.0px;transform:scaleX(0.740);">LineScanTime</div>
<div class="t" style="left:673.80px;top:308.76px;font-size:6.0px;transform:scaleX(0.760);">7</div>
<div class="t" style="left:632.20px;top:317.82px;font-size:6.0px;transform:scaleX(0.740);">TotalScanTime</div>
<div class="t" style="left:673.80px;top:317.82px;font-size:6.0px;transform:scaleX(0.760);">1725</div>
<div class="t" style="left:632.20px;top:326.88px;font-size:6.0px;transform:scaleX(0.740);">RequiredMaxLigh...</div>
<div class="t" style="left:673.80px;top:326.88px;font-size:6.0px;transform:scaleX(0.760);">185000</div>
<div class="t" style="left:632.20px;top:335.94px;font-size:6.0px;transform:scaleX(0.740);">MaxSpeed</div>
<div class="t" style="left:673.80px;top:335.94px;font-size:6.0px;transform:scaleX(0.760);">27</div>
<div class="t" style="left:632.20px;top:345.00px;font-size:6.0px;transform:scaleX(0.740);">MaxIRSpeed</div>
<div class="t" style="left:673.80px;top:345.00px;font-size:6.0px;transform:scaleX(0.760);">27</div>
<div class="t" style="left:632.20px;top:354.06px;font-size:6.0px;transform:scaleX(0.740);">IRIntegrationTime</div>
<div class="t" style="left:673.80px;top:354.06px;font-size:6.0px;transform:scaleX(0.760);">450</div>
<div class="t" style="left:632.20px;top:363.12px;font-size:6.0px;transform:scaleX(0.740);">SpeedMultiplier</div>
<div class="t" style="left:673.80px;top:363.12px;font-size:6.0px;transform:scaleX(0.760);">0.7</div>
<div class="t" style="left:632.20px;top:372.18px;font-size:6.0px;transform:scaleX(0.740);">measurementDire...</div>
<div class="t" style="left:673.80px;top:372.18px;font-size:6.0px;transform:scaleX(0.760);">C:\work\MetroSt...</div>
<div class="a" style="left:618.10px;top:382.90px;width:1.90px;height:1.90px;background:#1e1e1e;border-radius:0.6px"></div>
<div class="a" style="left:717.60px;top:35.00px;width:1.00px;height:359.00px;background:#a0a0a0"></div>
<div class="a" style="left:654.20px;top:397.60px;width:30.80px;height:8.10px;background:#e1e1e1;border:0.8px solid #bdbdbd"></div>
<div class="t" style="left:661.60px;top:400.27px;font-size:5.7px;transform:scaleX(0.802);">Refresh</div>
<svg class="a" style="left:0;top:0" width="720" height="423"><path fill="#1a1a1a" d="M441.90 54.85 L444.50 54.85 L443.20 53.15 Z M441.90 56.05 L444.50 56.05 L443.20 57.75 Z M441.90 74.75 L444.50 74.75 L443.20 73.05 Z M441.90 75.95 L444.50 75.95 L443.20 77.65 Z M427.90 101.70 L430.50 101.70 L429.20 100.00 Z M427.90 102.90 L430.50 102.90 L429.20 104.60 Z M398.40 122.00 L401.00 122.00 L399.70 120.30 Z M398.40 123.20 L401.00 123.20 L399.70 124.90 Z M486.10 122.00 L488.70 122.00 L487.40 120.30 Z M486.10 123.20 L488.70 123.20 L487.40 124.90 Z M398.40 132.10 L401.00 132.10 L399.70 130.40 Z M398.40 133.30 L401.00 133.30 L399.70 135.00 Z M486.10 132.10 L488.70 132.10 L487.40 130.40 Z M486.10 133.30 L488.70 133.30 L487.40 135.00 Z M398.40 142.80 L401.00 142.80 L399.70 141.10 Z M398.40 144.00 L401.00 144.00 L399.70 145.70 Z M486.10 142.80 L488.70 142.80 L487.40 141.10 Z M486.10 144.00 L488.70 144.00 L487.40 145.70 Z M398.40 153.70 L401.00 153.70 L399.70 152.00 Z M398.40 154.90 L401.00 154.90 L399.70 156.60 Z M486.10 153.70 L488.70 153.70 L487.40 152.00 Z M486.10 154.90 L488.70 154.90 L487.40 156.60 Z M398.20 176.80 L400.80 176.80 L399.50 175.10 Z M398.20 178.00 L400.80 178.00 L399.50 179.70 Z M398.20 187.00 L400.80 187.00 L399.50 185.30 Z M398.20 188.20 L400.80 188.20 L399.50 189.90 Z M485.80 174.90 L488.40 174.90 L487.10 173.20 Z M485.80 176.10 L488.40 176.10 L487.10 177.80 Z M485.80 185.50 L488.40 185.50 L487.10 183.80 Z M485.80 186.70 L488.40 186.70 L487.10 188.40 Z M485.80 196.10 L488.40 196.10 L487.10 194.40 Z M485.80 197.30 L488.40 197.30 L487.10 199.00 Z M485.80 206.70 L488.40 206.70 L487.10 205.00 Z M485.80 207.90 L488.40 207.90 L487.10 209.60 Z M617.2 45.93 L619.6 47.83 L617.2 49.73 Z"/></svg>
<svg class="a" style="left:0;top:0" width="720" height="423"><g stroke="#555" stroke-width="0.6" fill="none"><path d="M308.6 373 A1.4 1.4 0 0 1 311.4 373"/><path d="M361.4 414.2 A1.4 1.4 0 0 1 364.2 414.2"/></g></svg>
<div class="a" style="left:0.00px;top:421.60px;width:720.00px;height:1.40px;background:#888888"></div>
<div class="a" style="left:718.60px;top:12.60px;width:1.40px;height:410.40px;background:#a4a4a4"></div>
<div class="a" style="left:717.80px;top:13.60px;width:0.80px;height:20.00px;background:#fbfbfb"></div>
<div class="a" style="left:717.80px;top:395.00px;width:0.80px;height:26.60px;background:#fbfbfb"></div>
</body></html>
